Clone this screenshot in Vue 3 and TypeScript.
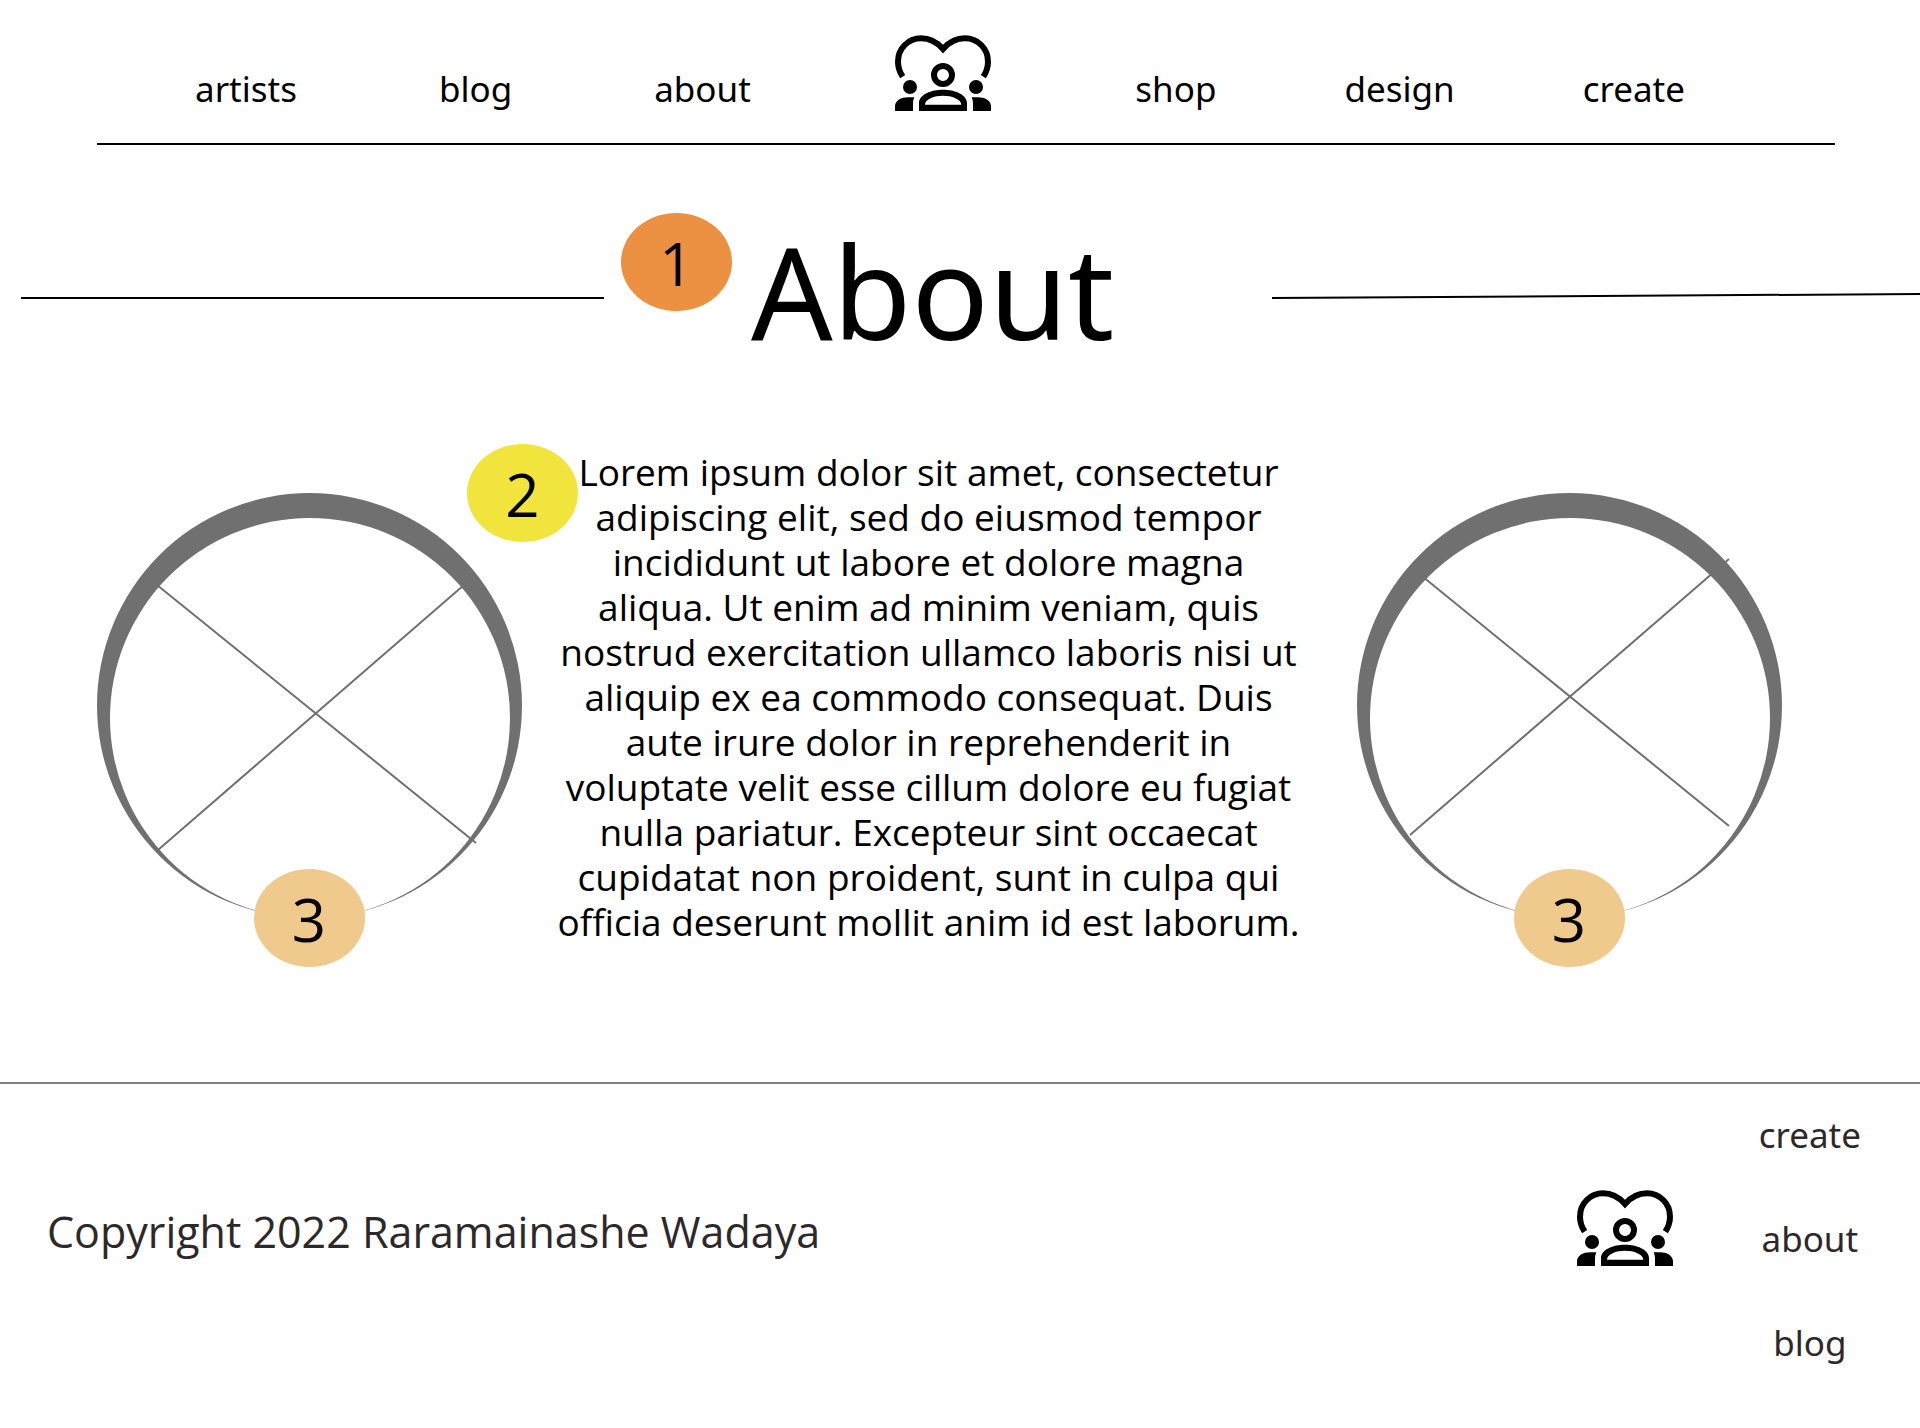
<script setup lang="ts">
import { defineComponent, h } from 'vue'

interface Ring {
  id: string
  label: string
  cross: string
}

const leftLinks: string[] = ['artists', 'blog', 'about']
const rightLinks: string[] = ['shop', 'design', 'create']
const footerLinks: string[] = ['create', 'about', 'blog']

const rings: Ring[] = [
  { id: 'left', label: '3', cross: 'M60 92L379 350M367 92L61 357' },
  { id: 'right', label: '3', cross: 'M60 79L372 333M372 66L53 342' },
]

// Heart with three people, shared by the header and the footer
const Logo = defineComponent({
  setup: () => () =>
    h('svg', { viewBox: '75 44 288 228', width: 96, height: 76, role: 'img', 'aria-label': 'home' }, [
      h('path', {
        d: 'M98 169C89 155 84 141 84 124C84 84 115 54 153 54C180 54 203 68 219 86C235 68 258 54 285 54C323 54 354 84 354 124C354 141 349 155 340 169',
        fill: 'none',
        stroke: '#000',
        'stroke-width': 18,
      }),
      h('circle', { cx: 219, cy: 164, r: 27, fill: 'none', stroke: '#000', 'stroke-width': 18 }),
      h('path', {
        d: 'M147 272V248C147 222 185 208 219 208C253 208 291 222 291 248V272ZM165 253H274C274 236 245 226 219 226C193 226 165 236 165 253Z',
        'fill-rule': 'evenodd',
      }),
      h('circle', { cx: 120, cy: 200, r: 21 }),
      h('circle', { cx: 318, cy: 200, r: 21 }),
      h('path', { d: 'M75 272V258C75 241 94 231 114 231H133C130 238 129 244 129 251V272Z' }),
      h('path', { d: 'M363 272V258C363 241 344 231 324 231H305C308 238 309 244 309 251V272Z' }),
    ]),
})
</script>

<template>
  <div class="page">
    <header class="header">
      <nav class="links links-left" aria-label="Explore">
        <a v-for="link in leftLinks" :key="link" href="#">{{ link }}</a>
      </nav>
      <a class="home" href="#"><Logo /></a>
      <nav class="links links-right" aria-label="Make">
        <a v-for="link in rightLinks" :key="link" href="#">{{ link }}</a>
      </nav>
    </header>

    <section class="hero">
      <div class="rule"></div>
      <div class="title">
        <span class="badge orange">1</span>
        <h1>About</h1>
      </div>
      <svg class="slope" viewBox="0 0 648 6" preserveAspectRatio="none" aria-hidden="true">
        <path d="M0 5L648 1" stroke="#000" stroke-width="2" />
      </svg>
    </section>

    <main class="content">
      <figure v-for="ring in rings" :key="ring.id" :class="['ring', ring.id]">
        <svg viewBox="0 0 425 425" aria-hidden="true">
          <path :d="ring.cross" class="cross" />
          <path
            class="band"
            fill-rule="evenodd"
            d="M0 212.5a212.5 212.5 0 0 1 425 0a212.5 212.5 0 0 1 -425 0ZM13 225a200 200 0 0 0 400 0a200 200 0 0 0 -400 0Z"
          />
        </svg>
        <figcaption class="badge sand">{{ ring.label }}</figcaption>
      </figure>
      <article class="story">
        <span class="badge yellow">2</span>
        <p>
          Lorem ipsum dolor sit amet, consectetur adipiscing elit, sed do eiusmod tempor incididunt
          ut labore et dolore magna aliqua. Ut enim ad minim veniam, quis nostrud exercitation
          ullamco laboris nisi ut aliquip ex ea commodo consequat. Duis aute irure dolor in
          reprehenderit in voluptate velit esse cillum dolore eu fugiat nulla pariatur. Excepteur
          sint occaecat cupidatat non proident, sunt in culpa qui officia deserunt mollit anim id
          est laborum.
        </p>
      </article>
    </main>

    <footer class="footer">
      <p class="copyright">Copyright 2022 Raramainashe Wadaya</p>
      <a class="home" href="#"><Logo /></a>
      <nav class="footer-links" aria-label="Footer">
        <a v-for="link in footerLinks" :key="link" href="#">{{ link }}</a>
      </nav>
    </footer>
  </div>
</template>

<style>
body {
  margin: 0;
  background: #fff;
}
</style>

<style scoped>
.page {
  overflow: hidden;
  color: #000;
  font-family: 'Open Sans', 'Noto Sans', sans-serif;
}

a {
  color: inherit;
  text-decoration: none;
}

.header {
  display: flex;
  justify-content: space-between;
  margin: 0 85px 0 97px;
  padding: 35px 150px 32px 98px;
  border-bottom: 2px solid #000;
}

.links {
  display: flex;
  padding-top: 30px;
  font: 35px/48px 'Noto Sans', sans-serif;
  height: 46px;
}

.links-left {
  gap: 142px;
}

.links-right {
  gap: 128px;
}

.home,
.home svg {
  display: block;
}

.hero {
  display: grid;
  grid-template-columns: 583fr 668fr 648fr;
  padding: 68px 0 0 21px;
}

.rule {
  height: 2px;
  margin-top: 84px;
  background: #000;
}

.title {
  display: flex;
  gap: 19px;
  height: 152px;
  padding-left: 17px;
}

.slope {
  width: 100%;
  height: 6px;
  margin-top: 80px;
}

h1 {
  margin: 0;
  padding-top: 6px;
  font: 128px/144px 'Noto Sans', sans-serif;
}

.badge {
  flex: none;
  width: 111px;
  height: 98px;
  border-radius: 50%;
  font-size: 60px;
  font-weight: 400;
  line-height: 100px;
  text-align: center;
}

.orange {
  background: #ec9142;
}

.yellow {
  position: absolute;
  top: -5px;
  left: -55px;
  background: #f1e43d;
}

.sand {
  position: absolute;
  bottom: -49px;
  left: 50%;
  margin-left: -56px;
  background: #f0c98c;
}

.content {
  display: grid;
  grid-template-columns: 425px 1fr 425px;
  padding: 84px 138px 138px 97px;
}

.ring {
  position: relative;
  grid-row: 1;
  height: 425px;
  margin: 44px 0 0;
}

.left {
  grid-column: 1;
}

.right {
  grid-column: 3;
}

.ring svg {
  display: block;
  width: 100%;
}

.band {
  fill: #707070;
}

.cross {
  fill: none;
  stroke: #707070;
  stroke-width: 2;
}

.story {
  position: relative;
  grid-row: 1;
  grid-column: 2;
  padding-right: 22px;
}

.story p {
  max-width: 748px;
  margin: 0 auto;
  font-size: 37px;
  line-height: 45px;
  text-align: center;
}

.footer {
  display: flex;
  align-items: center;
  padding: 27px 59px 45px 47px;
  border-top: 2px solid #808080;
  color: #2d2829;
}

.copyright {
  flex: 1;
  margin: 0;
  padding-bottom: 14px;
  font-size: 43px;
  line-height: 60px;
}

.footer .home {
  padding-bottom: 22px;
}

.footer-links {
  display: flex;
  flex-direction: column;
  align-items: center;
  gap: 56px;
  margin-left: 86px;
  font: 35px/48px 'Noto Sans', sans-serif;
}
</style>
